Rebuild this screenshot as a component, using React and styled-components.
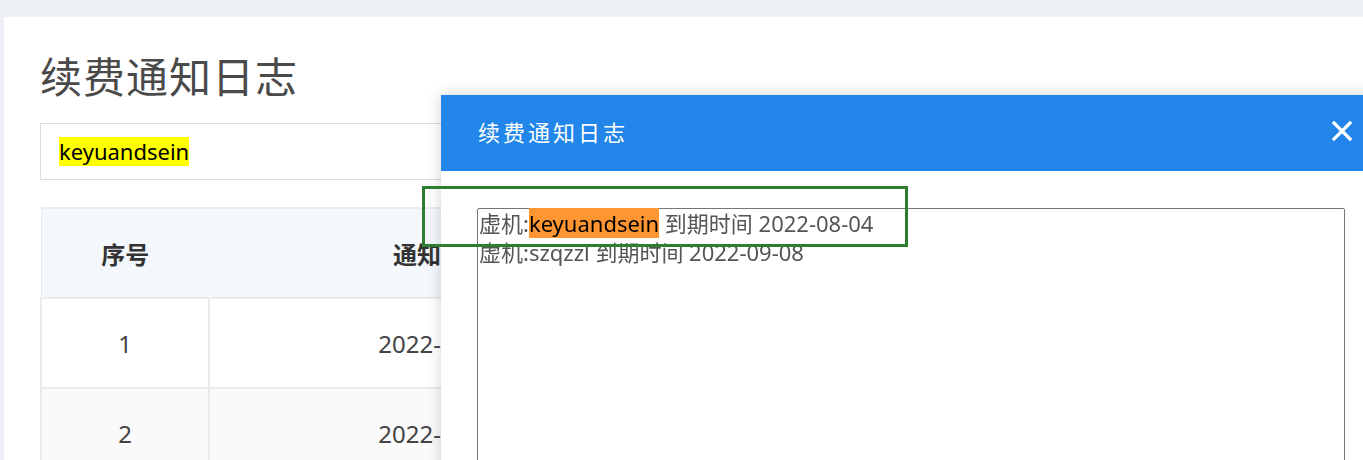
import React from "react";
import styled, { createGlobalStyle } from "styled-components";

const Global = createGlobalStyle`
  html, body { margin: 0; padding: 0; }
  body {
    background: #edf0f5;
    overflow: hidden;
    width: 1363px;
    height: 460px;
    font-family: "Noto Sans", "Noto Sans CJK SC", sans-serif;
    color: #4a4a4a;
  }
`;

const Page = styled.div`
  padding: 17px 0 0 4px;
  height: 460px;
  box-sizing: border-box;
`;

const Card = styled.div`
  background: #fff;
  height: 100%;
  padding: 0 0 0 36px;
  box-sizing: border-box;
  overflow: hidden;
`;

const Title = styled.h1`
  margin: 0;
  padding-top: 30px;
  height: 106px;
  box-sizing: border-box;
  font-family: "Noto Sans CJK SC", sans-serif;
  font-weight: 400;
  font-size: 42px;
  line-height: 56px;
  color: #4a4a4a;
  letter-spacing: 1px;
`;

const Search = styled.div`
  width: 1200px;
  height: 57px;
  border: 1px solid #dcdcdc;
  box-sizing: border-box;
  display: flex;
  align-items: center;
  padding-left: 18px;
  font-size: 22px;
  color: #000;
`;

const Mark = styled.span`
  background: ${(p) => (p.$active ? "#ff9632" : "#ffff00")};
  color: #000;
  line-height: 29px;
`;

const Table = styled.table`
  margin-top: 27px;
  border-collapse: collapse;
  width: 1200px;
  border: 1px solid #ebebeb;
  table-layout: fixed;
`;

const Th = styled.th`
  background: #f4f7fb;
  height: 88px;
  font-size: 24px;
  font-weight: 700;
  color: #333;
  font-family: "Noto Sans CJK SC", sans-serif;
  border-top: 2px solid #ebebeb;
  border-bottom: 2px solid #ebebeb;
  text-align: center;
  padding: 0;
`;

const Td = styled.td`
  height: 88px;
  text-align: center;
  font-size: 24px;
  color: #444;
  border: 2px solid #ebebeb;
  padding: 0;
  background: ${(p) => (p.$odd ? "#fafafa" : "#fff")};
`;

const Modal = styled.div`
  position: fixed;
  left: 441px;
  top: 95px;
  width: 940px;
  height: 500px;
  background: #fff;
  box-shadow: 0 0 14px rgba(0, 0, 0, 0.18);
  display: flex;
  flex-direction: column;
`;

const ModalHead = styled.div`
  flex: 0 0 76px;
  background: #2185ea;
  display: flex;
  align-items: center;
  justify-content: space-between;
  padding: 0 0 0 37px;
  box-sizing: border-box;
`;

const ModalTitle = styled.div`
  color: #fff;
  font-family: "Noto Sans CJK SC", sans-serif;
  font-size: 22px;
  letter-spacing: 3px;
  margin-top: -4px;
`;

const Close = styled.button`
  border: 0;
  background: none;
  padding: 0;
  margin-right: 28px;
  margin-top: -4px;
  width: 22px;
  height: 22px;
  display: flex;
  cursor: pointer;
`;

const ModalBody = styled.div`
  padding: 37px 36px 0 36px;
`;

const Area = styled.div`
  border: 1px solid #767676;
  border-radius: 2px;
  height: 400px;
  padding: 0 1px;
  font-size: 22px;
  line-height: 29px;
  color: #555;
  font-family: "Noto Sans", "Noto Sans CJK SC", sans-serif;
`;

const Line = styled.div`
  white-space: pre;
`;

const Annot = styled.div`
  position: fixed;
  left: 422px;
  top: 186px;
  width: 486px;
  height: 61px;
  border: 3px solid #2f7d32;
  box-sizing: border-box;
  pointer-events: none;
`;

export default function App() {
  return (
    <>
      <Global />
      <Page>
        <Card>
          <Title>续费通知日志</Title>
          <Search>
            <Mark>keyuandsein</Mark>
          </Search>
          <Table>
            <colgroup>
              <col style={{ width: "168px" }} />
              <col style={{ width: "464px" }} />
              <col />
            </colgroup>
            <thead>
              <tr>
                <Th>序号</Th>
                <Th>通知时间</Th>
                <Th>操作</Th>
              </tr>
            </thead>
            <tbody>
              <tr>
                <Td>1</Td>
                <Td>2022-07-28</Td>
                <Td>查看</Td>
              </tr>
              <tr>
                <Td $odd>2</Td>
                <Td $odd>2022-07-21</Td>
                <Td $odd>查看</Td>
              </tr>
            </tbody>
          </Table>
        </Card>
      </Page>
      <Modal>
        <ModalHead>
          <ModalTitle>续费通知日志</ModalTitle>
          <Close aria-label="close">
            <svg width="22" height="22" viewBox="0 0 22 22">
              <path d="M3 3 L19 19 M19 3 L3 19" stroke="#fff" strokeWidth="3.2" strokeLinecap="square" />
            </svg>
          </Close>
        </ModalHead>
        <ModalBody>
          <Area>
            <Line>
              虚机:<Mark $active>keyuandsein</Mark> 到期时间 2022-08-04
            </Line>
            <Line>虚机:szqzzl 到期时间 2022-09-08</Line>
          </Area>
        </ModalBody>
      </Modal>
      <Annot />
    </>
  );
}
